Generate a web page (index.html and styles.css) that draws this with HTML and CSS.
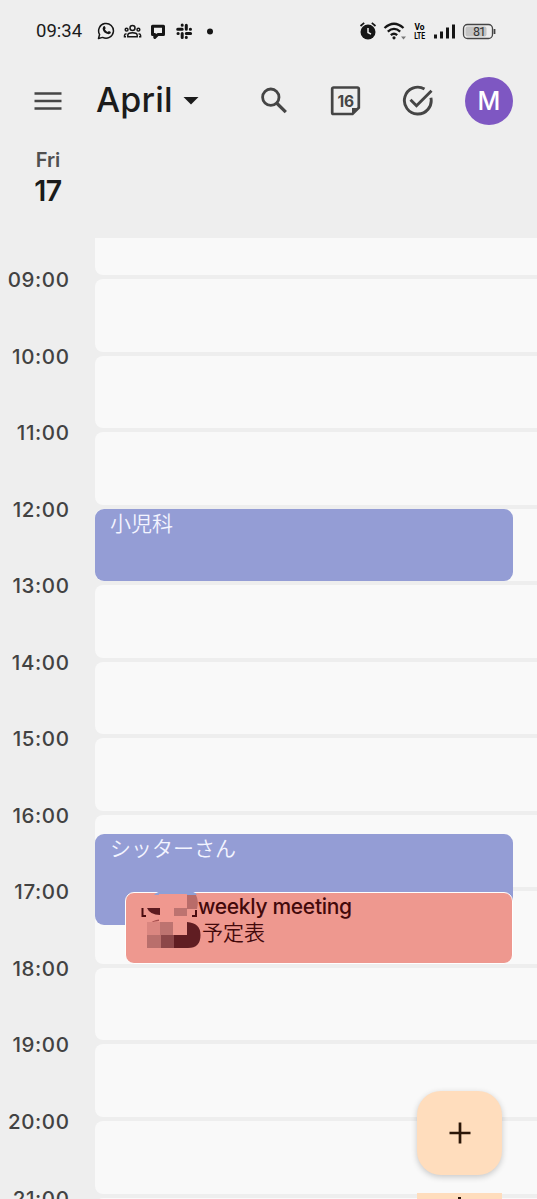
FILE: index.html
```html
<!DOCTYPE html>
<html lang="en">
<head>
    <meta charset="UTF-8">
    <meta name="viewport" content="width=device-width, initial-scale=1.0">
    <title>Calendar</title>
    <link rel="stylesheet" href="styles.css">
</head>
<body>
    <!-- Status bar -->
    <div class="status">
        <span class="clock">09:34</span>
        <svg class="notifications" width="120" height="20" viewBox="0 0 120 20">
            <path d="M1.500 17.500l1.100-4A7.400 7.400 0 1 1 5.600 16.400z" fill="none" stroke="#161616" stroke-width="1.500" stroke-linejoin="round"/>
            <path d="M6.200 5.700q1.300-1.300 2 .2l.5 1.300-.8 1.100q1 1.900 2.900 2.700l1.100-1 2 1q.2 2-2.300 2.200-5.200-.8-6-5.400z" fill="#161616"/>
            <g fill="none" stroke="#161616" stroke-width="1.500">
                <circle cx="35.500" cy="7" r="2.500"/>
                <path d="M30.800 15.700v-1.400q0-2.500 4.700-2.500t4.700 2.500v1.400z"/>
                <circle cx="29.600" cy="8.700" r="1.400"/>
                <circle cx="41.400" cy="8.700" r="1.400"/>
                <path d="M29 15.700h-1.500v-1.200q0-1.400 2-1.700M42 15.700h1.600v-1.200q0-1.400-2-1.700"/>
            </g>
            <path d="M55.500 5.200h11v8.300h-5.700l-3 3v-3h-2.300z" fill="none" stroke="#161616" stroke-width="3" stroke-linejoin="round"/>
            <g stroke="#161616" stroke-width="3" stroke-linecap="round">
                <path d="M85.200 4v.2M85.200 8.300h-4.500M89.300 4.300v4M93.300 8.300h.2M89.300 12.400h4.300M89.300 16.500v-.2M85.200 12.400v4M81 12.400h.2"/>
            </g>
            <circle cx="113" cy="10.500" r="3" fill="#161616"/>
        </svg>
        <svg class="system" width="140" height="22" viewBox="0 0 140 22">
            <circle cx="10" cy="12" r="7.500" fill="#161616"/>
            <path d="M2.500 6l3.700-3.200M17.500 6l-3.700-3.200" stroke="#161616" stroke-width="1.700"/>
            <path d="M10 8v4.500l3 1.700" fill="none" stroke="#eee" stroke-width="1.500"/>
            <g fill="none" stroke="#161616" stroke-width="2.300">
                <path d="M26.500 8q9.500-8.500 19 0M29.800 11.700q6.200-5.600 12.400 0M32.800 15.200q3.200-2.800 6.400 0"/>
            </g>
            <circle cx="36" cy="17.800" r="1.600" fill="#161616"/>
            <path d="M43 16.500h5l-2.500 3z" fill="#777"/>
            <text class="volte" x="56.500" y="9.800" textLength="10" lengthAdjust="spacingAndGlyphs">Vo</text>
            <text class="volte" x="56.200" y="18.700" textLength="11" lengthAdjust="spacingAndGlyphs">LTE</text>
            <path d="M77.500 18.500v-4M83.500 18.500v-7M89.500 18.500v-11M95.500 18.500v-14" stroke="#161616" stroke-width="3"/>
            <rect x="105.500" y="4.500" width="29" height="14" rx="4" fill="none" stroke="#444" stroke-width="1.300"/>
            <rect x="107.500" y="6.500" width="21" height="10" rx="2" fill="#c4c4c4"/>
            <path d="M136.500 9v5" stroke="#444" stroke-width="1.800"/>
            <text class="battery" x="115" y="16.300" textLength="13">81</text>
        </svg>
    </div>

    <!-- Toolbar -->
    <div class="toolbar">
        <svg class="menu" width="28" height="20" viewBox="0 0 28 20">
            <path d="M.5 2.500h27M.5 10h27M.5 17.500h27" stroke="#464646" stroke-width="2.700"/>
        </svg>
        <h1 class="month">April</h1>
        <svg class="arrow" width="16" height="8" viewBox="0 0 16 8"><path d="M.5 0h15L8 7.500z" fill="#1b1b1b"/></svg>
        <svg class="search" width="30" height="30" viewBox="0 0 30 30" fill="none" stroke="#454545">
            <circle cx="11.800" cy="11.200" r="8.200" stroke-width="2.800"/>
            <path d="M17.600 17l9.200 9.200" stroke-width="3.200"/>
        </svg>
        <svg class="today" width="32" height="32" viewBox="0 0 32 32">
            <path d="M3.500 2.500h24a1.300 1.300 0 0 1 1.300 1.300v19L22.500 29h-19a1.300 1.300 0 0 1-1.300-1.300V3.800a1.300 1.300 0 0 1 1.300-1.300z" fill="none" stroke="#454545" stroke-width="2.700"/>
            <path d="M22 29.500v-6.500h7z" fill="#454545"/>
            <text x="7.500" y="21.700" textLength="16.500">16</text>
        </svg>
        <svg class="tasks" width="32" height="32" viewBox="0 0 32 32" fill="none" stroke="#454545" stroke-width="2.900">
            <path d="M22.500 4A13.400 13.400 0 1 0 28.900 12.800"/>
            <path d="M8.500 14.800l6 6L29.500 5.800"/>
        </svg>
        <div class="avatar">M</div>
    </div>

    <div class="day">
        <span class="weekday">Fri</span>
        <span class="date">17</span>
    </div>

    <!-- Day grid -->
    <div class="schedule">
        <div class="hours">
            <span>09:00</span>
            <span>10:00</span>
            <span>11:00</span>
            <span>12:00</span>
            <span>13:00</span>
            <span>14:00</span>
            <span>15:00</span>
            <span>16:00</span>
            <span>17:00</span>
            <span>18:00</span>
            <span>19:00</span>
            <span>20:00</span>
            <span>21:00</span>
        </div>
        <div class="slots">
            <div class="slot first"></div>
            <div class="slot"></div>
            <div class="slot"></div>
            <div class="slot"></div>
            <div class="slot"></div>
            <div class="slot"></div>
            <div class="slot"></div>
            <div class="slot"></div>
            <div class="slot"></div>
            <div class="slot"></div>
            <div class="slot"></div>
            <div class="slot"></div>
            <div class="slot"></div>
            <div class="slot"></div>

            <div class="event clinic">小児科</div>
            <div class="event sitter">シッターさん</div>
            <div class="event meeting">
                <span class="title">weekly meeting</span>
                <span class="place">予定表</span>
            </div>
            <!-- Redacted part of the meeting title -->
            <svg class="redacted" width="76" height="62" viewBox="0 0 76 62">
                <path d="M29 7q3-4 12-4h20q9 0 11 4z" fill="#8f9fd6"/>
                <path d="M34 6h28v28H34z" fill="#f0988f"/>
                <path d="M62 7h9q3 6 1 14H62z" fill="#b96c69"/>
                <path d="M22 20h13v7q-10 0-13-7z" fill="#5c1b20"/>
                <path d="M49 20h13v8H49z" fill="#bd7370"/>
                <path d="M17.500 20v8h3.500M71 22v6h-4" fill="none" stroke="#4a0d10" stroke-width="2"/>
                <path d="M24 36q4-4 10-4.500v1.500q-5 0-10 3z" fill="#a8504f"/>
                <path d="M22 34h13v13H22z" fill="#da8680"/>
                <path d="M35 34h13v13H35z" fill="#bd7370"/>
                <path d="M22 47h14v13H22z" fill="#b96f6c"/>
                <path d="M36 47h13v13H36z" fill="#8c4749"/>
                <path d="M62 34q13.500 1 13.500 13 0 13-12.500 13H49V47h13z" fill="#601d22"/>
            </svg>
        </div>
    </div>

    <div class="fab">
        <svg width="22" height="22" viewBox="0 0 22 22"><path d="M11 .5v21M.5 11h21" stroke="#2b1608" stroke-width="2.700"/></svg>
    </div>
    <div class="fab-next"></div>
</body>
</html>
```
FILE: styles.css
```css
* {
  box-sizing: border-box;
}

body {
  margin: 0;
  height: 1199px;
  overflow: hidden;
  position: relative;
  background-color: #eee;
  color: #1b1b1b;
  font-family: Inter, "Noto Sans CJK JP", sans-serif;
}

svg {
  display: block;
  flex: none;
}

/* Status bar */
.status {
  display: flex;
  align-items: center;
  height: 62px;
  padding-left: 36px;
}

.clock {
  width: 61px;
  font-family: Roboto, sans-serif;
  font-size: 18.5px;
}

.system {
  margin-left: 141px;
}

.volte {
  font: bold 9.5px Roboto, sans-serif;
}

.battery {
  font: 12.5px Roboto, sans-serif;
  fill: #333;
}

/* Toolbar */
.toolbar {
  display: flex;
  align-items: center;
  height: 78px;
  padding-left: 34px;
}

.month {
  width: 77px;
  margin: 0 0 2px 34px;
  font-size: 34px;
  font-weight: 500;
  line-height: 40px;
  letter-spacing: 0.2px;
}

.arrow {
  margin-left: 10px;
}

.search {
  margin-left: 60px;
}

.today {
  margin-left: 41px;
}

.today text {
  font: 700 15.5px Inter, sans-serif;
  fill: #454545;
}

.tasks {
  margin-left: 40px;
}

.avatar {
  display: flex;
  align-items: center;
  justify-content: center;
  width: 48px;
  height: 48px;
  margin-left: 31px;
  border-radius: 50%;
  background-color: #7e57c2;
  color: #fff;
  font-size: 25px;
  font-weight: 500;
}

.day {
  display: flex;
  flex-direction: column;
  align-items: center;
  width: 96px;
  height: 98px;
  padding-top: 8px;
}

.weekday {
  color: #505050;
  font-size: 20px;
  font-weight: 600;
  line-height: 24px;
}

.date {
  font-size: 28.5px;
  font-weight: 600;
  line-height: 38px;
  letter-spacing: -0.5px;
}

/* Day grid */
.schedule {
  display: flex;
  height: 961px;
  overflow: hidden;
}

.hours {
  display: flex;
  flex-direction: column;
  width: 95px;
  padding: 4px 25.5px 0 0;
}

.hours span {
  height: 76.55px;
  flex: none;
  color: #424242;
  font-size: 20.5px;
  font-weight: 450;
  line-height: 76px;
  letter-spacing: 0.6px;
  text-align: right;
}

.slots {
  position: relative;
  display: flex;
  flex-direction: column;
  flex: 1;
  gap: 4px;
}

.slot {
  flex: none;
  height: 72.55px;
  border-radius: 8px 0 0 8px;
  background-color: #f9f9f9;
}

.slot.first {
  height: 37px;
  border-radius: 0 0 0 8px;
}

/* Events lie over the hour slots */
.event {
  position: absolute;
  left: 0;
  width: 418px;
  padding: 1px 0 0 15px;
  border-radius: 9px;
  background-color: #949dd5;
  color: #f3f4ff;
  font-size: 21px;
  font-weight: 350;
  line-height: 28px;
}

.clinic {
  top: 271px;
  height: 72px;
}

.sitter {
  top: 596px;
  height: 91px;
}

.meeting {
  display: flex;
  flex-direction: column;
  top: 654px;
  left: 30px;
  width: 388px;
  height: 72px;
  padding: 1px 0 0 72px;
  border: 1.5px solid #fff;
  background-color: #ee988f;
  color: #43090b;
  line-height: 26px;
}

.title {
  font-weight: 450;
  letter-spacing: -0.3px;
}

.place {
  padding-left: 4px;
}

.redacted {
  position: absolute;
  top: 650px;
  left: 30px;
}

/* Create button */
.fab {
  position: absolute;
  top: 1091px;
  left: 417px;
  display: flex;
  align-items: center;
  justify-content: center;
  width: 85px;
  height: 84px;
  border-radius: 24px;
  background-color: #ffddbd;
  box-shadow: 0 2px 6px rgba(0, 0, 0, 0.2);
}

.fab-next {
  position: absolute;
  top: 1193px;
  left: 417px;
  width: 85px;
  height: 6px;
  background: linear-gradient(#2b1608, #2b1608) 41px 4px / 3px 2px no-repeat #ffddbd;
}
```
